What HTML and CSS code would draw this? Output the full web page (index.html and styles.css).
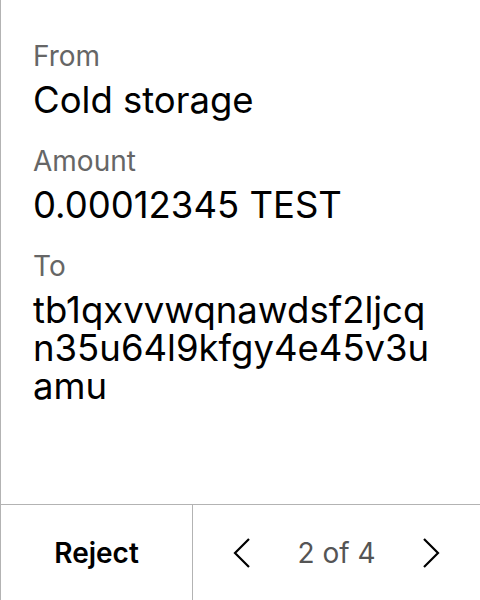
FILE: index.html
```html
<!DOCTYPE html>
<html>
<head>
<meta charset="utf-8">
<link rel="stylesheet" href="styles.css">
</head>
<body>
<div class="screen">
  <div class="content">
    <div class="field">
      <div class="label">From</div>
      <div class="value">Cold storage</div>
    </div>
    <div class="field">
      <div class="label">Amount</div>
      <div class="value">0.00012345 TEST</div>
    </div>
    <div class="field">
      <div class="label">To</div>
      <div class="value address">tb1qxvvwqnawdsf2ljcqn35u64l9kfgy4e45v3uamu</div>
    </div>
  </div>
  <div class="footer">
    <div class="reject">Reject</div>
    <div class="pager">
      <svg class="chev" width="20" height="32" viewBox="0 0 20 32"><path d="M17 2 L3 16 L17 30" fill="none" stroke="#000" stroke-width="2.2"/></svg>
      <span class="count">2 of 4</span>
      <svg class="chev" width="20" height="32" viewBox="0 0 20 32"><path d="M3 2 L17 16 L3 30" fill="none" stroke="#000" stroke-width="2.2"/></svg>
    </div>
  </div>
</div>
</body>
</html>
```
FILE: styles.css
```css
html, body {
  margin: 0;
  padding: 0;
  background: #fff;
}
body {
  font-family: Inter, "Noto Sans", sans-serif;
  color: #000;
}
.screen {
  width: 479px;
  height: 600px;
  border-left: 1px solid #b3b3b3;
  display: flex;
  flex-direction: column;
}
.content {
  flex: 1;
  padding: 39px 39px 0 32px;
  display: flex;
  flex-direction: column;
  gap: 25px;
}
.field {
  display: flex;
  flex-direction: column;
  gap: 8px;
}
.label {
  font-size: 28px;
  line-height: 34px;
  color: #666;
}
.value {
  font-size: 36.5px;
  line-height: 38px;
  color: #000;
}
.address {
  word-break: break-all;
}
.footer {
  height: 95px;
  border-top: 1px solid #b3b3b3;
  display: flex;
}
.reject {
  width: 191px;
  border-right: 1px solid #b3b3b3;
  display: flex;
  align-items: center;
  justify-content: center;
  font-size: 28px;
  font-weight: 600;
}
.pager {
  flex: 1;
  display: flex;
  align-items: center;
  justify-content: space-between;
  padding: 0 39px 0 39px;
}
.count {
  font-size: 28px;
  color: #555;
}
.chev {
  display: block;
}
```
